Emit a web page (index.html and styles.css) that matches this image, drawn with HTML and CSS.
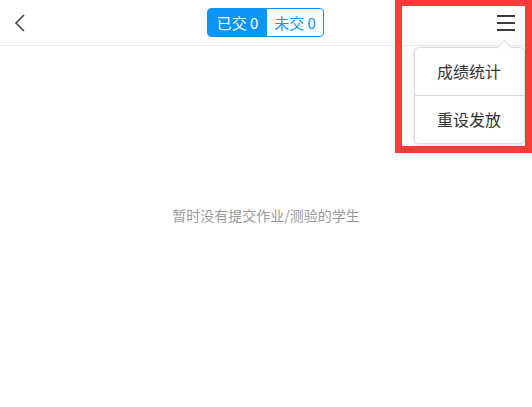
FILE: index.html
```html
<!DOCTYPE html>
<html lang="zh">
<head>
    <meta charset="UTF-8">
    <title>提交情况</title>
    <link rel="stylesheet" href="styles.css">
</head>
<body>
<div class="page">
    <div class="top-bar">
        <button class="back-btn" aria-label="返回">
            <svg width="12" height="18" viewBox="0 0 12 18">
                <path d="M10 1 L2 9 L10 17" fill="none" stroke="#444" stroke-width="1.6"/>
            </svg>
        </button>
        <div class="seg">
            <span class="seg-item active">已交 0</span>
            <span class="seg-item">未交 0</span>
        </div>
        <button class="menu-btn" aria-label="菜单">
            <span></span><span></span><span></span>
        </button>
    </div>

    <!-- 下拉菜单 -->
    <div class="drop-menu">
        <div class="drop-item">成绩统计</div>
        <div class="drop-item">重设发放</div>
    </div>

    <div class="empty-tip">暂时没有提交作业/测验的学生</div>

    <div class="mark-box"></div>
</div>
</body>
</html>
```

FILE: styles.css
```css
:root {
    --blue: #0b95f7;
    --line: #ececec;
    --text: #333;
}

body {
    margin: 0;
    background: #fff;
    font-family: "Noto Sans CJK SC", "Noto Sans", sans-serif;
    color: var(--text);
}
.page {
    position: relative;
    width: 532px;
    height: 407px;
    overflow: hidden;
}

/* ========== 顶部栏 ========== */
.top-bar {
    display: flex;
    align-items: center;
    justify-content: space-between;
    height: 45px;
    padding: 0 17px 0 14px;
    border-bottom: 1px solid var(--line);
}
.back-btn,
.menu-btn {
    background: transparent;
    border: none;
    padding: 0;
    cursor: pointer;
}
.back-btn {
    display: flex;
    width: 18px;
    height: 20px;
    align-items: center;
}
.menu-btn {
    display: flex;
    flex-direction: column;
    gap: 5px;
    width: 18px;
}
.menu-btn span {
    display: block;
    height: 2px;
    background: #3a3a3a;
}

/* --- 已交/未交 切换 --- */
.seg {
    display: flex;
    height: 29px;
    border: 1px solid var(--blue);
    border-radius: 4px;
    overflow: hidden;
    box-sizing: border-box;
    margin-left: 2px;
}
.seg-item {
    display: flex;
    align-items: center;
    justify-content: center;
    width: 56px;
    font-size: 15px;
    color: var(--blue);
}
.seg-item.active {
    width: 59px;
    background: var(--blue);
    color: #fff;
}

/* ========== 下拉菜单 ========== */
.drop-menu {
    position: absolute;
    top: 47px;
    right: 7px;
    width: 109px;
    background: #fff;
    border: 1px solid #dcdcdc;
    border-radius: 5px;
    box-shadow: 0 1px 4px rgba(0, 0, 0, 0.12);
}
.drop-menu:before {
    content: "";
    position: absolute;
    top: -6px;
    right: 14px;
    width: 10px;
    height: 10px;
    background: #fff;
    border-left: 1px solid #dcdcdc;
    border-top: 1px solid #dcdcdc;
    transform: rotate(45deg);
}
.drop-item {
    position: relative;
    height: 47px;
    line-height: 47px;
    padding-left: 22px;
    font-size: 16px;
    color: var(--text);
}
.drop-item + .drop-item {
    border-top: 1px solid #d6d6d6;
}

/* ========== 空状态 ========== */
.empty-tip {
    margin-top: 159px;
    text-align: center;
    font-size: 14px;
    line-height: 20px;
    color: #999;
}

/* 标注框 */
.mark-box {
    position: absolute;
    left: 395px;
    top: -1px;
    width: 137px;
    height: 154px;
    box-sizing: border-box;
    border: 7px solid #fb3a3a;
    pointer-events: none;
}
```
